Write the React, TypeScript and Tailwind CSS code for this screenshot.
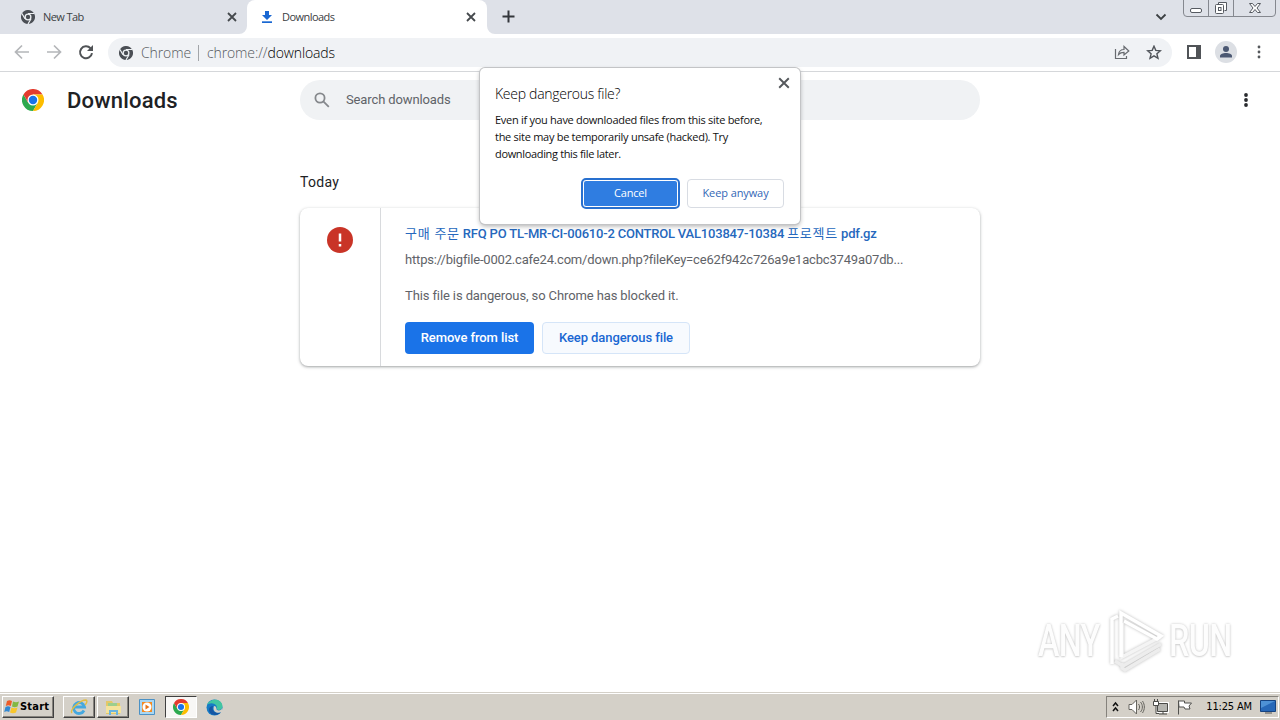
import React from "react";

const UI = "font-['Open_Sans','Noto_Sans',sans-serif]";

function ChromeMark({ size, mono = false }: { size: number; mono?: boolean }) {
  const red = mono ? "#4b4f55" : "#e33b2e";
  const green = mono ? "#4b4f55" : "#2da94f";
  const yellow = mono ? "#4b4f55" : "#fdbd00";
  const line = mono ? "#eef1f4" : "none";
  return (
    <svg width={size} height={size} viewBox="0 0 48 48" className="shrink-0">
      <path d="M24 24 3.2 12A24 24 0 0 1 44.8 12L24 12Z" fill={red} />
      <path d="M3.2 12A24 24 0 0 0 24 48L34.4 30 24 24 13.6 30Z" fill={green} />
      <path d="M44.8 12A24 24 0 0 1 24 48L34.4 30 24 24V12Z" fill={yellow} />
      <path d="M3.2 12 13.6 30 24 24 24 12Z" fill={red} />
      <path d="M24 12H44.8M13.6 30 3.2 12M34.4 30 24 48" stroke={line} strokeWidth="4" fill="none" />
      <circle cx="24" cy="24" r="12" fill={mono ? "#eef1f4" : "#fff"} />
      <circle cx="24" cy="24" r={mono ? 7.5 : 9.2} fill={mono ? "#4b4f55" : "#1a73e8"} />
    </svg>
  );
}

function Cross({ size, color = "#45494d", width = 1.8 }: { size: number; color?: string; width?: number }) {
  return (
    <svg width={size} height={size} viewBox="0 0 10 10" className="shrink-0">
      <path d="M1 1l8 8M9 1l-8 8" stroke={color} strokeWidth={width} />
    </svg>
  );
}

function Dots({ color, r }: { color: string; r: number }) {
  return (
    <svg width="6" height="16" viewBox="0 0 6 16" className="shrink-0" fill={color}>
      <circle cx="3" cy="3" r={r} />
      <circle cx="3" cy="8" r={r} />
      <circle cx="3" cy="13" r={r} />
    </svg>
  );
}

function TabStrip() {
  return (
    <div className={`flex h-[34px] bg-[#dee1e8] text-[11px] text-[#3c4043] ${UI}`}>
      <div className="flex w-[247px] items-center pl-[21px] pr-[10px]">
        <ChromeMark size={14} mono />
        <span className="ml-2 tracking-[-0.6px]">New Tab</span>
        <span className="ml-auto"><Cross size={10} /></span>
      </div>
      <div className="relative flex w-[240px] items-center rounded-t-[8px] bg-white pl-[14px] pr-[11px]">
        <svg className="absolute bottom-0 -left-2" width="8" height="8"><path d="M8 0v8H0a8 8 0 0 0 8-8Z" fill="#fff" /></svg>
        <svg className="absolute -right-2 bottom-0" width="8" height="8"><path d="M0 0v8h8a8 8 0 0 1-8-8Z" fill="#fff" /></svg>
        <svg width="12" height="12" viewBox="0 0 12 12" fill="#1967d2">
          <path d="M4 0h4v4h3L6 9 1 4h3Z" /><path d="M1 10.3h10V12H1Z" />
        </svg>
        <span className="ml-[9px] tracking-[-0.55px]">Downloads</span>
        <span className="ml-auto"><Cross size={10} /></span>
      </div>
      <svg className="mt-[10px] ml-[15px]" width="13" height="13"><path d="M6.5 .5v12M.5 6.5h12" stroke="#33363b" strokeWidth="2" /></svg>
      <svg className="mt-[13px] ml-auto" width="12" height="8" fill="none"><path d="m1.5 1.5 4.5 4.5 4.5-4.5" stroke="#3c4043" strokeWidth="1.8" /></svg>
      <div className="mt-[-1px] mr-1 ml-4 flex h-[18px] w-[93px] rounded-b-[4px] border border-[#85888f]">
        <svg width="91" height="16" viewBox="0 0 91 16" fill="none" stroke="#565a61">
          <path d="M24.5 0v16M49.5 0v16" stroke="#85888f" />
          <rect x="6.500" y="8.500" width="11" height="4" rx="1.500" fill="#fff" />
          <path d="M34.500 4.500V2.500h8v8h-2" fill="#fff" />
          <rect x="31.500" y="4.500" width="8" height="9" rx="1" fill="#fff" />
          <rect x="34.500" y="7.500" width="2.500" height="3" />
          <path d="M65.500 3.500h3l2.500 3 2.500-3h3l-3.500 4.500 3.500 4.500h-3l-2.500-3-2.500 3h-3l3.500-4.500Z" fill="#fff" />
        </svg>
      </div>
    </div>
  );
}

function Toolbar() {
  return (
    <div className="flex h-[38px] items-center border-b border-[#d5d7da] bg-white">
      <svg className="ml-[14px] -mt-px" width="80" height="18" viewBox="0 0 80 18" fill="none" strokeWidth="1.7">
        <path d="M15 9H2M8 2.500 1.500 9 8 15.500" stroke="#b4b6b9" />
        <path d="M33 9h13M40 2.500 46.500 9 40 15.500" stroke="#b4b6b9" />
        <path d="M76.500 5.200A6 6 0 1 0 78 10.200" stroke="#505356" strokeWidth="2" />
        <path d="M79 2v6h-6Z" fill="#505356" />
      </svg>
      <div className={`ml-[14px] flex h-[29px] w-[1064px] items-center rounded-full bg-[#f0f2f5] pr-[10px] pl-[11px] text-[14px] font-light text-[#565a5e] ${UI}`}>
        <ChromeMark size={14} mono />
        <span className="ml-2 w-[49px] tracking-[-0.1px]">Chrome</span>
        <span className="mx-2 h-[16px] w-px bg-[#a2a5a9]" />
        <span className="tracking-[-0.12px]">chrome://<span className="text-black">downloads</span></span>
        <svg className="ml-auto" width="16" height="16" viewBox="0 0 16 16" fill="none" stroke="#686b70" strokeWidth="1.200">
          <path d="M1.500 4v9.500h11V11" /><path d="M4.500 9.500c.5-3.500 2.500-5 5.500-5V1.500L14.800 6 10 10V7.300c-2.300 0-4 .5-5.500 2.200Z" />
        </svg>
        <svg className="ml-[16px]" width="16" height="16" viewBox="0 0 16 16" fill="none" stroke="#50545a" strokeWidth="1.400">
          <path d="m8 1.200 1.800 4.200 4.600.4-3.500 3 1.100 4.500L8 10.900l-4 2.400 1.100-4.500-3.500-3 4.600-.4Z" />
        </svg>
      </div>
      <svg className="-mt-px ml-[15px]" width="14" height="14"><path d="M1 1h12v12H1Z" fill="none" stroke="#505357" strokeWidth="2" /><path d="M9 1h4v12H9Z" fill="#505357" /></svg>
      <svg className="-mt-px ml-[14px]" width="22" height="22"><circle cx="11" cy="11" r="11" fill="#dcdfe4" /><circle cx="11" cy="8" r="3" fill="#4b5872" /><path d="M5 16.500v-1.500c0-4 12-4 12 0v1.500Z" fill="#4b5872" /></svg>
      <span className="-mt-px ml-[19px] flex"><Dots color="#55585c" r={1.4} /></span>
    </div>
  );
}

function SecurityDialog() {
  return (
    <div className={`absolute top-[68px] left-[480px] h-[156px] w-[320px] rounded-[5px] bg-white px-[15px] text-[#111] shadow-[0_0_0_1px_#c3c4c6,0_2px_5px_#0005] ${UI}`}>
      <span className="absolute top-[9px] right-[10px] flex"><Cross size={12} color="#55585c" width={1.6} /></span>
      <h2 className="pt-[16px] text-[14px] leading-[20px] font-light tracking-[-0.28px] text-black">Keep dangerous file?</h2>
      <p className="mt-[7px] text-[11px] leading-[17px] whitespace-nowrap">
        <span className="block tracking-[-0.28px]">Even if you have downloaded files from this site before,</span>
        <span className="block tracking-[-0.28px]">the site may be temporarily unsafe (hacked). Try</span>
        <span className="block tracking-[-0.34px]">downloading this file later.</span>
      </p>
      <div className="mt-[18px] flex pl-[88px] text-[11px]">
        <button className="h-[27px] w-[95px] rounded-[3px] border border-white bg-[#2f7de1] tracking-[-0.2px] text-white outline-2 outline-[#2870cf]">Cancel</button>
        <button className="mt-[-1px] ml-[9px] h-[29px] w-[97px] rounded-[4px] border border-[#d8dce3] tracking-[-0.1px] text-[#3367b6]">Keep anyway</button>
      </div>
    </div>
  );
}

function DownloadsPage() {
  return (
    <main className="h-[620px] bg-white font-[Roboto,'Noto_Sans_CJK_KR',sans-serif]">
      <header className="flex h-[56px] items-center pl-[22px]">
        <ChromeMark size={22} />
        <h1 className="ml-[23px] w-[233px] text-[22px] font-medium tracking-[0.2px] text-[#202124]">Downloads</h1>
        <div className="flex h-[40px] w-[680px] items-center rounded-full bg-[#f0f2f4] pl-[14px] text-[13px] text-[#5f6368]">
          <svg width="16" height="16" viewBox="0 0 16 16" fill="none" stroke="#85888c" strokeWidth="1.800"><circle cx="6" cy="6" r="4.600" /><path d="m9.300 9.300 5.500 5.500" /></svg>
          <span className="ml-4 tracking-[-0.12px]">Search downloads</span>
        </div>
        <span className="ml-[263px] flex"><Dots color="#292b2e" r={1.9} /></span>
      </header>
      <section className="mx-auto w-[680px]">
        <h2 className="pt-[44px] text-[14px] leading-[20px] tracking-[0.3px] text-[#202124]">Today</h2>
        <article className="mt-[16px] flex h-[158px] rounded-[8px] shadow-[0_1px_2px_#3c40434d,0_1px_3px_1px_#3c404326]">
          <div className="flex w-[81px] justify-center border-r border-[#d8dadd] pt-[19px]">
            <svg width="26" height="26"><circle cx="13" cy="13" r="13" fill="#c93427" /><path d="M13 6.500v8M13 17v2.500" stroke="#fff" strokeWidth="2.500" /></svg>
          </div>
          <div className="pl-[24px] text-[13px] whitespace-nowrap text-[#5f6368]">
            <a className="mt-[16px] block h-[20px] leading-[20px] font-medium tracking-[-0.2px] text-[#2668bd]"><span className="font-normal tracking-[0.75px]">구매 주문</span> RFQ PO TL-MR-CI-00610-2 CONTROL VAL103847-10384 <span className="font-normal tracking-[0.75px]">프로젝트</span> pdf.gz</a>
            <p className="mt-[6px] leading-[20px] tracking-[-0.18px]">https://bigfile-0002.cafe24.com/down.php?fileKey=ce62f942c726a9e1acbc3749a07db...</p>
            <p className="mt-[16px] leading-[20px] tracking-[-0.11px]">This file is dangerous, so Chrome has blocked it.</p>
            <div className="mt-[16px] flex gap-2 font-medium tracking-[-0.08px]">
              <button className="h-[32px] w-[129px] rounded-[4px] bg-[#1a73e8] text-white">Remove from list</button>
              <button className="h-[32px] w-[148px] rounded-[4px] border border-[#d5e5f8] bg-[#f7fafe] text-[#1967d2]">Keep dangerous file</button>
            </div>
          </div>
        </article>
      </section>
    </main>
  );
}

function Watermark() {
  return (
    <div className="absolute top-[608px] left-[1038px] flex h-[66px] w-[194px] items-center justify-between font-[Roboto,sans-serif] text-[45px] font-medium text-[#fdfdfd] [text-shadow:0_0_3px_#c4c4c4,0_1px_2px_#ddd]">
      <span className="w-[64px] origin-left scale-x-[0.72] tracking-[-1px]">ANY</span>
      <svg className="overflow-visible [filter:drop-shadow(0_0_1.5px_#bbb)]" width="56" height="62" viewBox="0 0 56 62" fill="none" strokeWidth="3.5">
        <path d="M7 51 15 56 53 34" stroke="#ededed" />
        <path d="M14 53v5l3 2 35-21" stroke="#ededed" />
        <path d="M14 13v34l38-20" stroke="#f4f4f4" />
        <path d="M4 54V9l6-3M13 47V3l40 23-4 3L16 11" stroke="#fff" />
      </svg>
      <span className="w-[63px] origin-left scale-x-[0.72] tracking-[-1px]">RUN</span>
    </div>
  );
}

const raised = "border border-t-white border-l-white border-r-[#404040] border-b-[#404040] shadow-[inset_-1px_-1px_0_#85827c]";

function Taskbar() {
  return (
    <footer className="flex h-[28px] items-start border-t border-[#d4d0c8] bg-[#d4d0c8] pt-[3px] pl-[2px] font-['DejaVu_Sans_Condensed','DejaVu_Sans',sans-serif] text-[11px] text-black shadow-[inset_0_1px_0_#fff]">
      <button className={`flex h-[22px] w-[52px] items-center pl-px ${raised}`}>
        <svg width="16" height="16" viewBox="0 0 16 16">
          <path d="M3 2c2-1 3-1 5 0L6.800 7c-2-1-3-1-5 0Z" fill="#ee5c28" /><path d="M9 2.500c2 1 4 1 6 0l-1.500 5c-2 1-3.500 1-5.500 0Z" fill="#82b844" />
          <path d="M1.500 8c2-1 3-1 5 0l-1.300 5c-2-1-3-1-5 0Z" fill="#3288d2" /><path d="M7.500 8.500c2 1 4 1 6 0l-1.500 5c-2 1-4 1-6 0Z" fill="#f8c62c" />
        </svg>
        <b className="tracking-[0.2px]">Start</b>
      </button>
      <span className={`ml-[9px] flex h-[22px] w-[32px] items-center justify-center ${raised}`}>
        <svg width="18" height="18" viewBox="0 0 18 18" fill="none"><path d="M14 12.500A5.500 5.500 0 1 1 14.500 9H5" stroke="#45a8df" strokeWidth="2.800" /><path d="M2 15C-1 12 10 2 16 2c2 1 0 4-1 5" stroke="#e2bd43" strokeWidth="1.400" /></svg>
      </span>
      <span className={`ml-[2px] flex h-[22px] w-[32px] items-center justify-center ${raised}`}>
        <svg width="17" height="17" viewBox="0 0 17 17"><path d="M1 2h6l1 2h7v11H1Z" fill="#e4c867" /><path d="M3 4h9v4H3Z" fill="#9cce8e" /><path d="M1 7h15v7H1Z" fill="#f4e39c" /><path d="M4 16v-5h9v5h-2v-3H6v3Z" fill="#6ab4df" /></svg>
      </span>
      <svg className="mt-[3px] ml-[10px]" width="16" height="16"><path d="M.5.500h15v15H.5Z" fill="#a9d7f3" stroke="#4b91c5" /><path d="M3 3h10v10H3Z" fill="#f48a21" /><circle cx="8" cy="8" r="4.500" fill="#fff" /><path d="m6.500 5.500 4 2.500-4 2.500Z" fill="#e8761a" /></svg>
      <span className="ml-[10px] flex h-[22px] w-[32px] items-center justify-center border border-t-[#404040] border-r-white border-b-white border-l-[#404040] bg-[#f8f7f5]"><ChromeMark size={16} /></span>
      <svg className="mt-[3px] ml-[9px]" width="17" height="17" viewBox="0 0 17 17">
        <circle cx="8.500" cy="8.500" r="8" fill="#167bc5" /><path d="M1 6C3 0 15-2 16.500 7c0 4-4 5-6 3 1-2 0-4-2-5C5 3.500 2 5 1 6Z" fill="#41c5a2" /><path d="M7 7c-2 6 4 8 8 6-4 5-12 3-12-2 0-3 2-4 4-4Z" fill="#1656a3" /><path d="M8 7c3 0 2 3 3 4 2 1 5 0 5-2v4c-5 2-10 0-8-6Z" fill="#d4d0c8" />
      </svg>
      <div className="mr-px ml-auto flex h-[22px] w-[173px] items-center border border-t-[#85827c] border-r-white border-b-white border-l-[#85827c] pr-[2px] pl-[5px]">
        <svg width="7" height="12" fill="none" stroke="#111" strokeWidth="1.500"><path d="m1 5 2.500-3L6 5M1 10l2.500-3L6 10" /></svg>
        <svg className="ml-[9px]" width="17" height="16" viewBox="0 0 17 16" fill="none" stroke="#66655f"><path d="M1 5.500h3L8.500 1v14L4 10.500H1Z" fill="#fff" /><path d="M10.500 5c1.500 2 1.500 4 0 6M12.500 3c2.500 3 2.500 7 0 10M14.500 2c2.500 4 2.500 8 0 12" /></svg>
        <svg className="ml-[7px]" width="17" height="16" viewBox="0 0 17 16" fill="none" stroke="#4a4a47"><path d="M5.500 4.500h10v8h-10Z" stroke="#fff" strokeWidth="3" /><path d="M5.500 4.500h10v8h-10Z" fill="#b5b5b0" /><path d="M7 15h8M11 13v2" /><path d="M1.500 2.500h5v4h-5ZM2.500 0v2M5.500 0v2" fill="#fff" /><path d="M4 7v7.500h3" /></svg>
        <svg className="ml-[7px]" width="17" height="16" viewBox="0 0 17 16" fill="#fff" stroke="#51514e"><path d="M2.500 15.500V1.500M2.500 2h6v2h7l-2.500 3 1 3h-5l-1-2h-5Z" /></svg>
        <span className="ml-auto pt-px tracking-[-0.15px]">11:25 AM</span>
        <svg className="ml-[8px]" width="16" height="14"><path d="M.5.500h15v11H.5Z" fill="#2768b8" stroke="#164381" /><path d="M1 1h14L1 8Z" fill="#4e91d5" /><path d="M5 13h7" stroke="#555" /></svg>
      </div>
    </footer>
  );
}

export default function App() {
  return (
    <div className="relative h-[720px] w-[1280px] overflow-hidden bg-white">
      <TabStrip />
      <Toolbar />
      <DownloadsPage />
      <Taskbar />
      <Watermark />
      <SecurityDialog />
    </div>
  );
}
